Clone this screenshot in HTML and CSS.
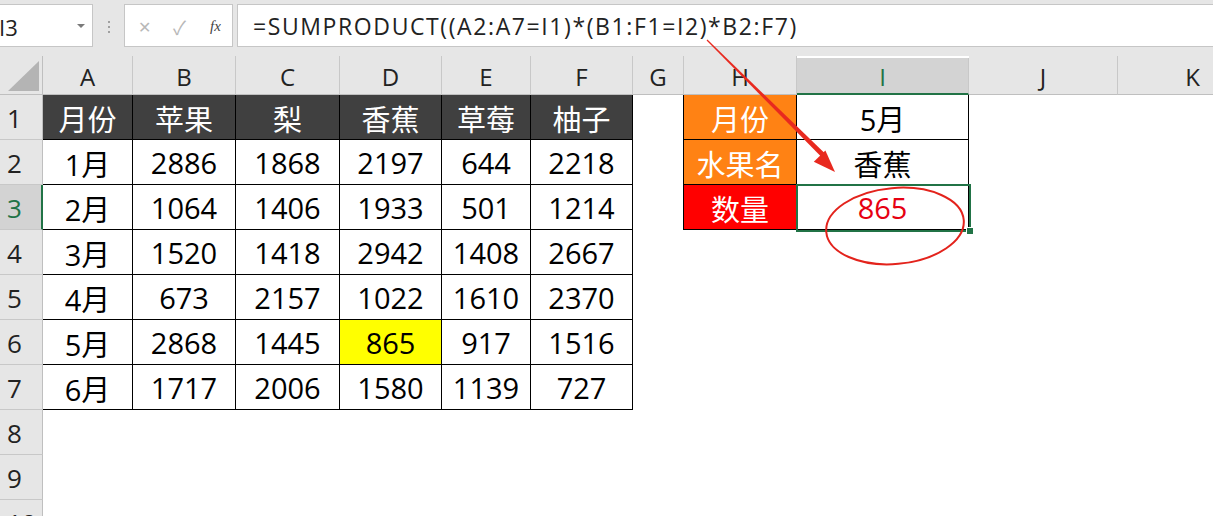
FILE: index.html
```html
<!DOCTYPE html>
<html lang="zh">
<head>
<meta charset="utf-8">
<title>SUMPRODUCT</title>
<link rel="stylesheet" href="styles.css">
</head>
<body>
<div class="app">
  <div class="toolbar">
    <div class="namebox"><span class="name">I3</span><span class="dd"></span></div>
    <div class="grip"><i></i><i></i><i></i></div>
    <div class="fxbtns"><span class="x">✕</span><span class="ok">✓</span><span class="fx">fx</span></div>
    <div class="formula">=SUMPRODUCT((A2:A7=I1)*(B1:F1=I2)*B2:F7)</div>
  </div>
  <div class="sheet">
    <div class="corner"><svg width="31" height="30" viewBox="0 0 31 30"><polygon points="31,0 31,30 0,30" fill="#b4b4b4"/></svg></div>
    <div class="ch">A</div><div class="ch">B</div><div class="ch">C</div><div class="ch">D</div><div class="ch">E</div><div class="ch">F</div><div class="ch">G</div><div class="ch">H</div><div class="ch sel-col">I</div><div class="ch">J</div><div class="ch">K</div>

    <div class="rh">1</div>
    <div class="t th">月份</div><div class="t th">苹果</div><div class="t th">梨</div><div class="t th">香蕉</div><div class="t th">草莓</div><div class="t th">柚子</div>
    <div class="c gb"></div><div class="t o">月份</div><div class="t">5月</div><div class="c"></div><div class="c"></div>

    <div class="rh">2</div>
    <div class="t">1月</div><div class="t">2886</div><div class="t">1868</div><div class="t">2197</div><div class="t">644</div><div class="t">2218</div>
    <div class="c gb"></div><div class="t o">水果名</div><div class="t">香蕉</div><div class="c"></div><div class="c"></div>

    <div class="rh sel-row">3</div>
    <div class="t">2月</div><div class="t">1064</div><div class="t">1406</div><div class="t">1933</div><div class="t">501</div><div class="t">1214</div>
    <div class="c gb"></div><div class="t r">数量</div><div class="t red">865</div><div class="c"></div><div class="c"></div>

    <div class="rh">4</div>
    <div class="t">3月</div><div class="t">1520</div><div class="t">1418</div><div class="t">2942</div><div class="t">1408</div><div class="t">2667</div>
    <div class="c"></div><div class="c"></div><div class="c"></div><div class="c"></div><div class="c"></div>

    <div class="rh">5</div>
    <div class="t">4月</div><div class="t">673</div><div class="t">2157</div><div class="t">1022</div><div class="t">1610</div><div class="t">2370</div>
    <div class="c"></div><div class="c"></div><div class="c"></div><div class="c"></div><div class="c"></div>

    <div class="rh">6</div>
    <div class="t">5月</div><div class="t">2868</div><div class="t">1445</div><div class="t y">865</div><div class="t">917</div><div class="t">1516</div>
    <div class="c"></div><div class="c"></div><div class="c"></div><div class="c"></div><div class="c"></div>

    <div class="rh">7</div>
    <div class="t">6月</div><div class="t">1717</div><div class="t">2006</div><div class="t">1580</div><div class="t">1139</div><div class="t">727</div>
    <div class="c"></div><div class="c"></div><div class="c"></div><div class="c"></div><div class="c"></div>

    <div class="rh">8</div>
    <div class="c"></div><div class="c"></div><div class="c"></div><div class="c"></div><div class="c"></div><div class="c"></div><div class="c"></div><div class="c"></div><div class="c"></div><div class="c"></div><div class="c"></div>

    <div class="rh">9</div>
    <div class="c"></div><div class="c"></div><div class="c"></div><div class="c"></div><div class="c"></div><div class="c"></div><div class="c"></div><div class="c"></div><div class="c"></div><div class="c"></div><div class="c"></div>

    <div class="rh">10</div>
    <div class="c"></div><div class="c"></div><div class="c"></div><div class="c"></div><div class="c"></div><div class="c"></div><div class="c"></div><div class="c"></div><div class="c"></div><div class="c"></div><div class="c"></div>
  </div>
  <div class="selbox"></div>
  <div class="handle"></div>
  <svg class="annot" width="1213" height="516" viewBox="0 0 1213 516">
    <polygon points="706.6,40.4 707.4,39.6 825.8,154.2 822.2,157.8" fill="#e8291f"/>
    <polygon points="835,172 813.8,161.8 825.4,150.6" fill="#e8291f"/>
    <ellipse cx="895" cy="226" rx="69" ry="38" transform="rotate(-5 895 226)" fill="none" stroke="#e3231c" stroke-width="2"/>
  </svg>
</div>
</body>
</html>
```
FILE: styles.css
```css
html, body {
  margin: 0;
  padding: 0;
  background: #ffffff;
  overflow: hidden;
}
.app {
  position: relative;
  width: 1213px;
  height: 516px;
  overflow: hidden;
  font-family: "Open Sans", "Noto Sans CJK SC", sans-serif;
  color: #111;
}
.toolbar {
  height: 56px;
  background: #e6e6e6;
  display: flex;
  align-items: flex-start;
  padding-top: 4px;
  box-sizing: border-box;
}
.namebox {
  width: 93px;
  height: 43px;
  box-sizing: border-box;
  background: #fff;
  border: 1px solid #c6c6c6;
  border-left: none;
  display: flex;
  align-items: center;
  justify-content: space-between;
  padding-right: 7px;
}
.name {
  font-size: 22px;
  margin-left: -1px;
  padding-top: 3px;
  color: #222;
}
.dd {
  width: 0;
  height: 0;
  border-left: 4px solid transparent;
  border-right: 4px solid transparent;
  border-top: 4px solid #7a7a7a;
}
.grip {
  width: 31px;
  height: 43px;
  display: flex;
  flex-direction: column;
  align-items: center;
  justify-content: center;
  gap: 3px;
  padding-top: 2px;
  box-sizing: border-box;
}
.grip i {
  display: block;
  width: 2px;
  height: 2px;
  background: #a0a0a0;
}
.fxbtns {
  width: 109px;
  height: 43px;
  box-sizing: border-box;
  background: #fff;
  border: 1px solid #c6c6c6;
  display: flex;
  align-items: center;
  padding-top: 2px;
  padding-left: 13px;
}
.fxbtns .x {
  color: #b8b8b8;
  font-size: 16px;
  width: 35px;
}
.fxbtns .ok {
  color: #b8b8b8;
  font-size: 19px;
  width: 37px;
}
.fxbtns .fx {
  font-family: "Liberation Serif", serif;
  font-style: italic;
  font-size: 15px;
  color: #444;
}
.formula {
  flex: 1;
  margin-left: 4px;
  height: 43px;
  box-sizing: border-box;
  background: #fff;
  border: 1px solid #c6c6c6;
  border-right: none;
  font-size: 23px;
  letter-spacing: 1.6px;
  line-height: 40px;
  padding-top: 1px;
  padding-left: 15px;
  color: #222;
  white-space: nowrap;
}
.sheet {
  display: grid;
  grid-template-columns: 43px 90px 103px 104px 102px 89px 102px 51px 113px 172px 149px 150px;
  grid-template-rows: 39px repeat(10, 45px);
}
.sheet > div {
  box-sizing: border-box;
  display: flex;
  align-items: center;
  justify-content: center;
}
.corner {
  background: #e6e6e6;
  border-right: 1px solid #bfbfbf;
  border-bottom: 1px solid #bfbfbf;
  align-items: flex-end !important;
  justify-content: flex-end !important;
  padding: 0 3px 3px 0;
}
.corner svg {
  display: block;
}
.ch {
  background: #e6e6e6;
  border-right: 1px solid #c8c8c8;
  border-bottom: 1px solid #bfbfbf;
  font-size: 24px;
  color: #222;
  padding-top: 2px;
}
.ch.sel-col {
  background: #d3d3d3;
  color: #217346;
  border-bottom: 2px solid #217346;
  margin-top: 2px;
}
.rh {
  background: #e6e6e6;
  border-right: 1px solid #bfbfbf;
  border-bottom: 1px solid #c8c8c8;
  font-size: 26px;
  color: #222;
  justify-content: flex-start !important;
  padding-left: 7px;
  padding-top: 2px;
}
.rh.sel-row {
  background: #d3d3d3;
  color: #217346;
  border-right: 2px solid #217346;
}
.t {
  background: #fff;
  border-right: 1px solid #000;
  border-bottom: 1px solid #000;
  font-size: 29px;
  color: #000;
  padding-top: 1px;
}
.th {
  background: #404040;
  color: #fff;
}
.o {
  background: #ff8214;
  color: #fff;
}
.r {
  background: #ff0000;
  color: #fff;
}
.y {
  background: #ffff00;
}
.red {
  color: #e60012;
}
.c {
  background: #fff;
}
.gb {
  border-right: 1px solid #000;
}
.selbox {
  position: absolute;
  left: 796px;
  top: 184px;
  width: 175px;
  height: 48px;
  box-sizing: border-box;
  border: 2px solid #217346;
}
.handle {
  position: absolute;
  left: 966px;
  top: 227px;
  width: 8px;
  height: 8px;
  box-sizing: border-box;
  background: #217346;
  border: 1px solid #fff;
}
.annot {
  position: absolute;
  left: 0;
  top: 0;
  pointer-events: none;
}
```
